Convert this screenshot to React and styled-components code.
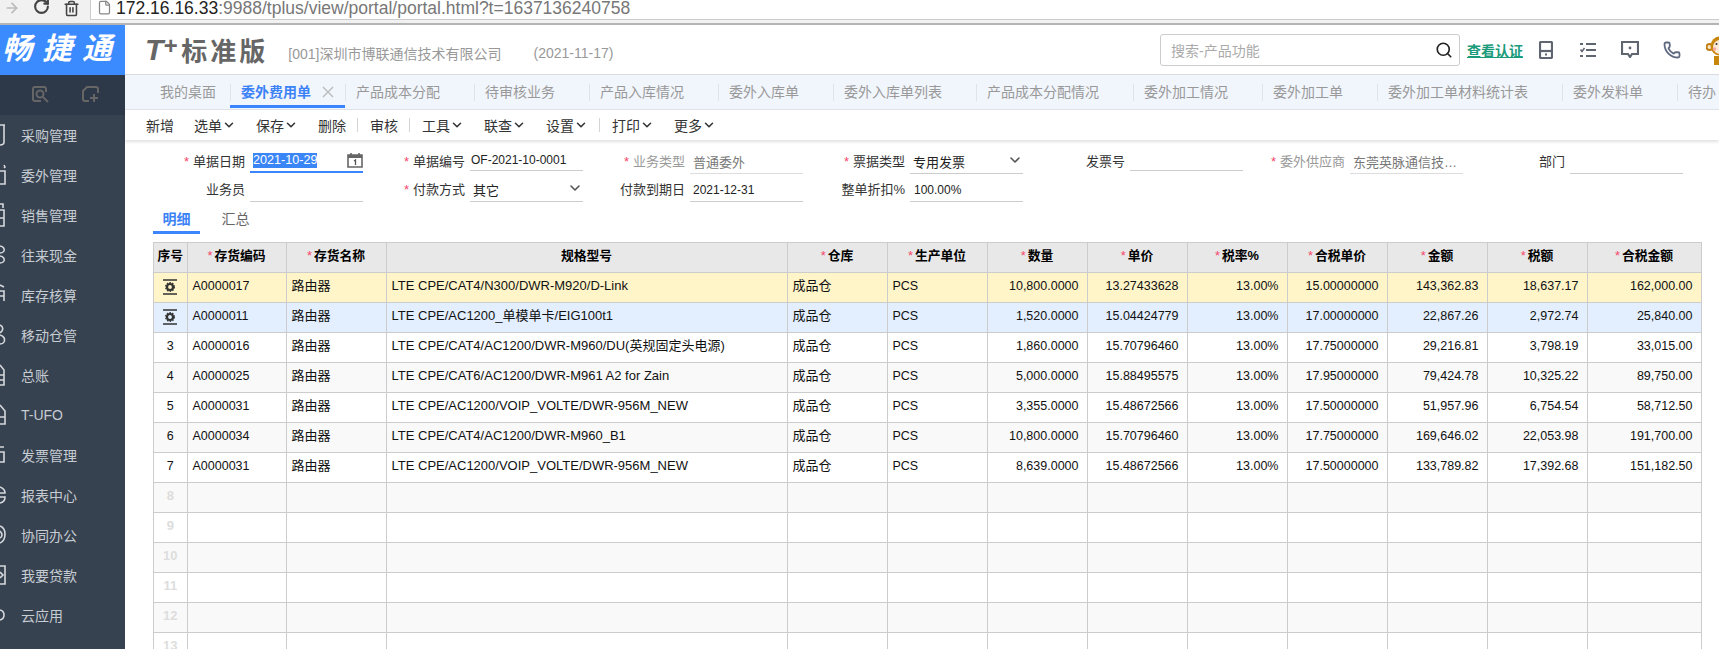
import React from "react";
import styled, { createGlobalStyle } from "styled-components";
import { ChevronDown, Phone, RotateCw, Search, Trash2, ArrowRight, File } from "lucide-react";

const GlobalStyle = createGlobalStyle`
  html, body {
    margin: 0;
    height: 100%;
    overflow: hidden;
    background: #fff;
    font-family: "Liberation Sans", "Noto Sans CJK SC", Arial, sans-serif;
  }
  * { box-sizing: border-box; }
`;

const Shell = styled.div`
  width: 1719px;
  height: 649px;
  display: flex;
  flex-direction: column;
  overflow: hidden;
`;

// browser chrome, cut off at the top of the picture
const BrowserBar = styled.div`
  height: 25px;
  flex: none;
  display: flex;
  background: #f1f1f1;
  border-bottom: 2px solid #b4b4b4;
  overflow: hidden;
`;
const NavButtons = styled.div`
  width: 90px;
  flex: none;
  display: flex;
  align-items: flex-start;
  padding-left: 4px;
  gap: 12px;
  color: #444;
`;
const AddressBox = styled.div`
  flex: 1;
  height: 20px;
  display: flex;
  align-items: flex-start;
  gap: 4px;
  padding-left: 6px;
  background: #fff;
  border-left: 1px solid #ccc;
  border-bottom: 1px solid #ccc;
  font-size: 17.5px;
  line-height: 17px;
  color: #777;
  white-space: nowrap;
  & b { font-weight: 400; color: #222; }
`;

const Body = styled.div`
  flex: 1;
  display: flex;
  min-height: 0;
`;

const Side = styled.aside`
  width: 125px;
  flex: none;
  background: #374250;
  overflow: hidden;
`;
const Logo = styled.div`
  height: 50px;
  background: #3b8bff;
  color: #fff;
  font-size: 30px;
  font-weight: 700;
  font-style: italic;
  letter-spacing: 10px;
  line-height: 48px;
  padding-left: 2px;
  white-space: nowrap;
`;
const SideHead = styled.div`
  height: 40px;
  background: #2d3848;
  display: flex;
  align-items: center;
  padding: 0 0 1px 32px;
  gap: 33px;
  color: #666;
`;
const MenuItem = styled.div`
  height: 40px;
  display: flex;
  align-items: center;
  color: #c6ccd2;
  font-size: 14px;
  padding-right: 4px;
  white-space: nowrap;
`;
const MenuGlyph = styled.svg`
  width: 6px;
  height: 24px;
  margin-right: 15px;
  flex: none;
  fill: none;
  stroke: #d5d8dc;
  stroke-width: 1.6;
`;

const Main = styled.main`
  flex: 1;
  min-width: 0;
  display: flex;
  flex-direction: column;
`;

const Header = styled.header`
  height: 50px;
  flex: none;
  display: flex;
  align-items: center;
  padding-left: 20px;
  border-bottom: 1px solid #dcdcdc;
`;
const TMark = styled.span`
  font-size: 30px;
  font-weight: 700;
  font-style: italic;
  color: #666;
  letter-spacing: 0;
  line-height: 1;
  & sup {
    font-size: 24px;
    line-height: 0;
    vertical-align: 6px;
  }
`;
const Edition = styled.span`
  margin-left: 4px;
  font-size: 26px;
  font-weight: 700;
  letter-spacing: 3px;
  color: #666;
  white-space: nowrap;
`;
const Company = styled.span`
  margin: 6px 0 0 ${(p) => p.$ml}px;
  font-size: 14px;
  color: #999;
  white-space: nowrap;
`;
const SearchBox = styled.div`
  margin-left: auto;
  width: 300px;
  height: 32px;
  display: flex;
  align-items: center;
  justify-content: space-between;
  padding: 0 6px 0 10px;
  border: 1px solid #ccc;
  border-radius: 3px;
  font-size: 14px;
  color: #aaa;
  & svg { color: #222; }
`;
const CertLink = styled.a`
  margin-left: 7px;
  font-size: 14px;
  font-weight: 700;
  color: #1a9b7b;
  text-decoration: underline;
  white-space: nowrap;
`;
const HeadIcon = styled.svg`
  margin-left: ${(p) => p.$ml}px;
  flex: none;
  fill: none;
  stroke: #5f6670;
  stroke-width: 2.2;
`;
const HeadPhone = styled(Phone)`
  margin-left: 24px;
  flex: none;
  color: #5f6a80;
`;
const MonkeyClip = styled.div`
  margin-left: 25px;
  width: 13px;
  height: 30px;
  overflow: hidden;
  flex: none;
`;

const TabStrip = styled.nav`
  height: 35px;
  flex: none;
  display: flex;
  background: #f1f5fc;
  border-bottom: 1px solid #e0e4ea;
  overflow: hidden;
`;
const Tab = styled.div`
  height: 33px;
  flex: none;
  display: flex;
  align-items: center;
  padding-top: 4px;
  font-size: 14px;
  white-space: nowrap;
  color: ${(p) => (p.$active ? "#3b82f6" : "#999")};
  font-weight: ${(p) => (p.$active ? 700 : 400)};
  border-bottom: 3px solid ${(p) => (p.$active ? "#3b86ff" : "transparent")};
`;
const TabLabel = styled.span`
  height: 17px;
  line-height: 16px;
  display: flex;
  align-items: center;
  padding: ${(p) => (p.$first ? "0 14px 0 35px" : p.$active ? "0 11px 0 10px" : "0 34px 0 10px")};
  border-left: ${(p) => (p.$first ? "0" : "1px solid #dfe4ea")};
`;
const TabClose = styled.svg`
  width: 12px;
  height: 12px;
  margin-left: 11px;
  fill: none;
  stroke: #bbb;
  stroke-width: 1.4;
`;

const Toolbar = styled.div`
  height: 30px;
  flex: none;
  display: flex;
  align-items: center;
  padding-left: 21px;
  font-size: 14px;
  color: #333;
  box-shadow: 0 2px 3px rgba(0, 0, 0, 0.12);
`;
const ToolButton = styled.span`
  width: ${(p) => p.$w}px;
  flex: none;
  display: flex;
  align-items: center;
  white-space: nowrap;
`;
const ToolSep = styled.i`
  width: 1px;
  height: 14px;
  margin: 0 12px 0 11px;
  background: #d5d5d5;
  flex: none;
`;

const FormGrid = styled.section`
  flex: none;
  margin-top: 10px;
  padding-left: 18px;
  display: grid;
  grid-template-columns: repeat(7, 220px);
  grid-auto-rows: 24px;
  row-gap: 4px;
`;
const FormCell = styled.div`
  display: flex;
  align-items: flex-start;
  gap: 5px;
`;
const FieldLabel = styled.label`
  width: 102px;
  flex: none;
  text-align: right;
  font-size: 13px;
  line-height: 23px;
  white-space: nowrap;
  color: ${(p) => (p.$muted ? "#999" : "#333")};
`;
const Star = styled.span`
  color: #f4476b;
  margin-right: 4px;
  font-weight: 400;
`;
const HeadStar = styled.span`
  color: #f4476b;
  margin-right: 2px;
  font-weight: 400;
`;
const Field = styled.div`
  width: 113px;
  height: ${(p) => (p.$short ? 21 : p.$focus ? 23 : 24)}px;
  display: flex;
  align-items: center;
  justify-content: space-between;
  padding-left: ${(p) => p.$pl ?? 3}px;
  padding-right: ${(p) => (p.$focus ? 0 : 3)}px;
  font-size: ${(p) => (p.$latin ? 12 : 13)}px;
  color: ${(p) => (p.$muted ? "#777" : "#222")};
  border-bottom: ${(p) => (p.$focus ? "2px solid #3b86ff" : `1px solid ${p.$muted ? "#ddd" : "#ccc"}`)};
  white-space: nowrap;
`;
const SelectArrow = styled(ChevronDown)`
  color: #555;
  flex: none;
  margin: -3px -3px 0 0;
`;
const Selected = styled.span`
  background: #3b86f7;
  color: #fff;
  font-size: 12.6px;
  line-height: 15px;
`;

const SubTabs = styled.div`
  flex: none;
  margin: 3px 0 8px 28px;
  display: flex;
  gap: 12px;
`;
const SubTab = styled.div`
  width: 47px;
  height: 29px;
  text-align: center;
  line-height: 28px;
  font-size: 14px;
  font-weight: ${(p) => (p.$active ? 700 : 400)};
  color: ${(p) => (p.$active ? "#3b82f6" : "#666")};
  border-bottom: 3px solid ${(p) => (p.$active ? "#3b86ff" : "transparent")};
`;

const Table = styled.table`
  margin-left: 28px;
  width: 1547px;
  flex: none;
  table-layout: fixed;
  border-collapse: collapse;
  font-size: 12.5px;
  color: #111;
`;
const Th = styled.th`
  height: 30px;
  padding: 0 0 3px;
  background: #e8e8e8;
  border: 1px solid #ccc;
  font-size: 12.8px;
  line-height: 16px;
  font-weight: 700;
  color: #000;
  text-align: center;
  white-space: nowrap;
`;
const rowColors = { yellow: "#fff5c8", blue: "#e3effe", grey: "#f9f9f9", white: "#fff" };
const Tr = styled.tr`
  background: ${(p) => rowColors[p.$tone]};
`;
const Td = styled.td`
  height: 30px;
  padding: ${(p) => (p.$right ? "0 8px 3px 0" : "0 0 3px 5px")};
  border: 1px solid #ccc;
  text-align: ${(p) => (p.$right ? "right" : "left")};
  font-size: ${(p) => (p.$size ? p.$size : 12.5)}px;
  line-height: 16px;
  white-space: nowrap;
  overflow: hidden;
`;
const NumTd = styled.td`
  height: 30px;
  padding: 0 0 3px;
  border: 1px solid #ccc;
  text-align: center;
  font-size: ${(p) => (p.$empty ? 13 : 12.5)}px;
  line-height: 16px;
  font-weight: ${(p) => (p.$empty ? 700 : 400)};
  color: ${(p) => (p.$empty ? "#ddd" : "#111")};
  & svg { display: block; margin: 2px auto 0; }
`;

const menu = [
  ["采购管理", "M0 2H5M4 2V19Q4 22 0 22"],
  ["委外管理", "M0 8H5V21H0M4 2L5 4L4 5"],
  ["销售管理", "M0 1H3V5M0 7H4V23H0M0 15H4"],
  ["往来现金", "M0 3Q5 4 4 8Q3 10 0 10M0 13Q5 14 4 18Q3 20 0 20"],
  ["库存核算", "M0 2L4 4M0 8H4V18M0 13H4"],
  ["移动仓管", "M0 2Q4 4 2 8L0 10M0 12Q6 14 4 19Q3 21 0 21"],
  ["总账", "M0 2L4 7V22H0M0 12H4M0 17H4"],
  ["T-UFO", "M0 2L5 8V21H0M0 14H5"],
  ["发票管理", "M0 4H4M0 9H4V19H0"],
  ["报表中心", "M0 4Q5 6 5 10H0M0 14H5Q5 19 0 20"],
  ["协同办公", "M0 3Q5 5 5 11Q5 18 0 20M0 8Q2 10 2 12Q2 14 0 15"],
  ["我要贷款", "M0 3H5V21H0M0 9L3 12L0 15"],
  ["云应用", "M0 7Q4 8 4 12Q4 16 0 17"],
];

const tabs = [
  "产品成本分配", "待审核业务", "产品入库情况", "委外入库单", "委外入库单列表", "产品成本分配情况",
  "委外加工情况", "委外加工单", "委外加工单材料统计表", "委外发料单", "待办",
];

const formCells = [
  { label: "单据日期", star: true, focus: true },
  { label: "单据编号", star: true, value: "OF-2021-10-0001", short: true, latin: true, pl: 1 },
  { label: "业务类型", star: true, muted: true, value: "普通委外" },
  { label: "票据类型", star: true, value: "专用发票", select: true },
  { label: "发票号", short: true },
  { label: "委外供应商", star: true, muted: true, value: "东莞英脉通信技…" },
  { label: "部门" },
  { label: "业务员" },
  { label: "付款方式", star: true, value: "其它", select: true },
  { label: "付款到期日", value: "2021-12-31", latin: true },
  { label: "整单折扣%", value: "100.00%", latin: true, pl: 4 },
];

const columns = [
  { w: 33.5, title: "序号" },
  { w: 99, title: "存货编码", star: true },
  { w: 100, title: "存货名称", star: true },
  { w: 401, title: "规格型号" },
  { w: 100, title: "仓库", star: true },
  { w: 100, title: "生产单位", star: true },
  { w: 100, title: "数量", star: true },
  { w: 100, title: "单价", star: true },
  { w: 100, title: "税率%", star: true },
  { w: 100, title: "合税单价", star: true },
  { w: 100, title: "金额", star: true },
  { w: 100, title: "税额", star: true },
  { w: 114, title: "合税金额", star: true },
];

const rows = [
  ["A0000017", "LTE CPE/CAT4/N300/DWR-M920/D-Link", "10,800.0000", "13.27433628", "15.00000000", "143,362.83", "18,637.17", "162,000.00"],
  ["A0000011", "LTE CPE/AC1200_单模单卡/EIG100t1", "1,520.0000", "15.04424779", "17.00000000", "22,867.26", "2,972.74", "25,840.00"],
  ["A0000016", "LTE CPE/CAT4/AC1200/DWR-M960/DU(英规固定头电源)", "1,860.0000", "15.70796460", "17.75000000", "29,216.81", "3,798.19", "33,015.00"],
  ["A0000025", "LTE CPE/CAT6/AC1200/DWR-M961 A2 for Zain", "5,000.0000", "15.88495575", "17.95000000", "79,424.78", "10,325.22", "89,750.00"],
  ["A0000031", "LTE CPE/AC1200/VOIP_VOLTE/DWR-956M_NEW", "3,355.0000", "15.48672566", "17.50000000", "51,957.96", "6,754.54", "58,712.50"],
  ["A0000034", "LTE CPE/CAT4/AC1200/DWR-M960_B1", "10,800.0000", "15.70796460", "17.75000000", "169,646.02", "22,053.98", "191,700.00"],
  ["A0000031", "LTE CPE/AC1200/VOIP_VOLTE/DWR-956M_NEW", "8,639.0000", "15.48672566", "17.50000000", "133,789.82", "17,392.68", "151,182.50"],
];

const toneOf = (i) => {
  if (i === 0) return "yellow";
  if (i === 1) return "blue";
  return i % 2 === 0 ? "white" : "grey";
};

const RowGear = () => (
  <svg width="16" height="16" viewBox="0 0 16 16">
    <path d="M1 1H15M1 15H15" stroke="#333" strokeWidth="1.4" fill="none" />
    <circle cx="8" cy="8" r="3" fill="none" stroke="#333" strokeWidth="2.2" />
    <circle cx="8" cy="8" r="4.4" fill="none" stroke="#333" strokeWidth="1.2" strokeDasharray="1.5 1.3" />
  </svg>
);

const CalendarIcon = () => (
  <svg width="16" height="15" viewBox="0 0 16 15">
    <path d="M1 2H15V14H1Z" fill="none" stroke="#666" strokeWidth="1.6" />
    <path d="M1 2H15V5H1Z" fill="#666" />
    <path d="M4 0V3M12 0V3" stroke="#666" strokeWidth="1.6" />
    <path d="M7 8L8.5 7V12" stroke="#555" strokeWidth="1.3" fill="none" />
  </svg>
);

const Monkey = () => (
  <svg width="28" height="30" viewBox="0 0 28 30">
    <circle cx="3.5" cy="12" r="3" fill="#fbe6c8" stroke="#c07d10" strokeWidth="2" />
    <circle cx="14" cy="11" r="9.5" fill="#c8860a" />
    <ellipse cx="14" cy="12" rx="7" ry="7" fill="#fbe9d6" />
    <circle cx="8.5" cy="14" r="1.8" fill="#f5a9a0" />
    <circle cx="10.5" cy="9" r="1" fill="#333" />
    <path d="M8 21H20V30H8Z" fill="#c8860a" />
  </svg>
);

const Chevron = () => <ChevronDown size={14} strokeWidth={2.6} />;

const App = () => (
  <Shell>
    <GlobalStyle />
    <BrowserBar>
      <NavButtons>
        <ArrowRight size={16} color="#bbb" strokeWidth={2.6} />
        <RotateCw size={17} strokeWidth={3} style={{ marginTop: -2, marginLeft: 1 }} />
        <Trash2 size={17} strokeWidth={2.2} style={{ marginLeft: 1 }} />
      </NavButtons>
      <AddressBox>
        <File size={15} color="#888" />
        <span>
          <b>172.16.16.33</b>:9988/tplus/view/portal/portal.html?t=1637136240758
        </span>
      </AddressBox>
    </BrowserBar>
    <Body>
      <Side>
        <Logo>畅捷通</Logo>
        <SideHead>
          <svg width="17" height="17" viewBox="0 0 17 17" fill="none" stroke="currentColor" strokeWidth="2">
            <path d="M9 15H3Q1 15 1 13V3Q1 1 3 1H12Q14 1 14 3V6" />
            <circle cx="8" cy="8" r="3.5" />
            <path d="M11 11L16 16" />
          </svg>
          <svg width="17" height="17" viewBox="0 0 17 17" fill="none" stroke="currentColor" strokeWidth="2">
            <path d="M7 15H3Q1 15 1 13V5L5 1H14Q16 1 16 3V7" />
            <path d="M12 8V16M8 12H16" />
          </svg>
        </SideHead>
        {menu.map(([name, d]) => (
          <MenuItem key={name}>
            <MenuGlyph viewBox="0 0 6 24">
              <path d={d} />
            </MenuGlyph>
            {name}
          </MenuItem>
        ))}
      </Side>
      <Main>
        <Header>
          <TMark>
            T<sup>+</sup>
          </TMark>
          <Edition>标准版</Edition>
          <Company $ml={20}>[001]深圳市博联通信技术有限公司</Company>
          <Company $ml={32}>(2021-11-17)</Company>
          <SearchBox>
            搜索-产品功能
            <Search size={18} strokeWidth={2.2} />
          </SearchBox>
          <CertLink>查看认证</CertLink>
          <HeadIcon $ml={16} width="14" height="18" viewBox="0 0 14 18">
            <rect x="1" y="1" width="12" height="16" rx="1" />
            <path d="M1 10H13" />
            <path d="M6 13.5H8" />
          </HeadIcon>
          <HeadIcon $ml={27} width="16" height="16" viewBox="0 0 16 16">
            <path d="M6 2H16M6 8H16M6 14H16M0 2H3M0 14H3" />
            <path d="M0.5 7.5L2 9.5L4.5 6" strokeWidth="1.6" />
          </HeadIcon>
          <HeadIcon $ml={25} width="18" height="17" viewBox="0 0 18 17">
            <path d="M1 1H17V13H11L9 16L7 13H1Z" />
            <circle cx="9" cy="7" r="1.4" fill="#5f6670" stroke="none" />
          </HeadIcon>
          <HeadPhone size={18} strokeWidth={2.4} />
          <MonkeyClip>
            <Monkey />
          </MonkeyClip>
        </Header>
        <TabStrip>
          <Tab>
            <TabLabel $first>我的桌面</TabLabel>
          </Tab>
          <Tab $active>
            <TabLabel $active>
              委外费用单
              <TabClose viewBox="0 0 12 12">
                <path d="M1 1L11 11M11 1L1 11" />
              </TabClose>
            </TabLabel>
          </Tab>
          {tabs.map((t) => (
            <Tab key={t}>
              <TabLabel>{t}</TabLabel>
            </Tab>
          ))}
        </TabStrip>
        <Toolbar>
          <ToolButton $w={48}>新增</ToolButton>
          <ToolButton $w={62}>选单<Chevron /></ToolButton>
          <ToolButton $w={62}>保存<Chevron /></ToolButton>
          <ToolButton $w={28}>删除</ToolButton>
          <ToolSep />
          <ToolButton $w={28}>审核</ToolButton>
          <ToolSep />
          <ToolButton $w={62}>工具<Chevron /></ToolButton>
          <ToolButton $w={62}>联查<Chevron /></ToolButton>
          <ToolButton $w={42}>设置<Chevron /></ToolButton>
          <ToolSep />
          <ToolButton $w={62}>打印<Chevron /></ToolButton>
          <ToolButton $w={62}>更多<Chevron /></ToolButton>
        </Toolbar>
        <FormGrid>
          {formCells.map((c) => (
            <FormCell key={c.label}>
              <FieldLabel $muted={c.muted}>
                {c.star && <Star>*</Star>}
                {c.label}
              </FieldLabel>
              <Field $short={c.short} $focus={c.focus} $muted={c.muted} $latin={c.latin} $pl={c.pl}>
                {c.focus && <Selected>2021-10-29</Selected>}
                {c.value}
                {c.focus && <CalendarIcon />}
                {c.select && <SelectArrow size={16} strokeWidth={2.4} />}
              </Field>
            </FormCell>
          ))}
        </FormGrid>
        <SubTabs>
          <SubTab $active>明细</SubTab>
          <SubTab>汇总</SubTab>
        </SubTabs>
        <Table>
          <colgroup>
            {columns.map((c) => (
              <col key={c.title} width={c.w} />
            ))}
          </colgroup>
          <thead>
            <tr>
              {columns.map((c) => (
                <Th key={c.title}>
                  {c.star && <HeadStar>*</HeadStar>}
                  {c.title}
                </Th>
              ))}
            </tr>
          </thead>
          <tbody>
            {rows.map((r, i) => (
              <Tr key={i} $tone={toneOf(i)}>
                <NumTd>{i < 2 ? <RowGear /> : i + 1}</NumTd>
                <Td>{r[0]}</Td>
                <Td $size={13}>路由器</Td>
                <Td $size={13}>{r[1]}</Td>
                <Td $size={13}>成品仓</Td>
                <Td>PCS</Td>
                <Td $right>{r[2]}</Td>
                <Td $right>{r[3]}</Td>
                <Td $right>13.00%</Td>
                <Td $right>{r[4]}</Td>
                <Td $right>{r[5]}</Td>
                <Td $right>{r[6]}</Td>
                <Td $right>{r[7]}</Td>
              </Tr>
            ))}
            {[8, 9, 10, 11, 12, 13].map((n) => (
              <Tr key={n} $tone={n % 2 === 0 ? "grey" : "white"}>
                <NumTd $empty>{n}</NumTd>
                {columns.slice(1).map((c) => (
                  <Td key={c.title} />
                ))}
              </Tr>
            ))}
          </tbody>
        </Table>
      </Main>
    </Body>
  </Shell>
);

export default App;
